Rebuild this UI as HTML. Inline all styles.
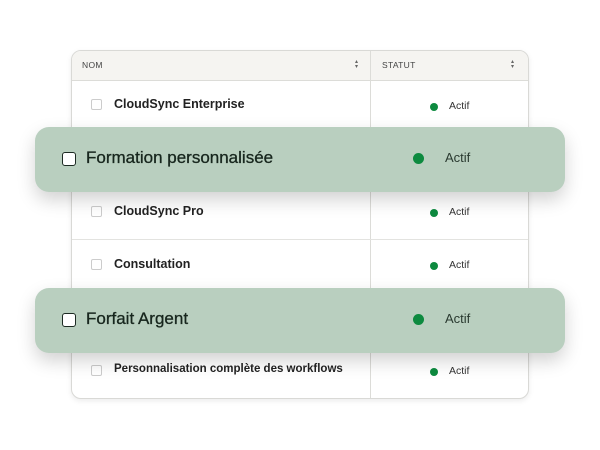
<!DOCTYPE html>
<html><head><style>
body{margin:0;width:600px;height:450px;background:#fff;font-family:"Liberation Sans",sans-serif;position:relative;overflow:hidden}
.tbl{position:absolute;left:71px;top:50px;width:456px;height:347px;border:1px solid #d9d9d6;border-radius:10px;overflow:hidden;box-shadow:0 2px 6px rgba(0,0,0,.08);background:#fff}
.hd{position:absolute;left:0;top:0;width:100%;height:29px;background:#f5f4f1;border-bottom:1px solid #dcdcd8}
.hd span{position:absolute;top:9px;font-size:8.5px;color:#444;letter-spacing:.3px}
.sort{position:absolute;top:9px;font-size:6px;color:#666;line-height:5px}
.vl{position:absolute;left:298px;top:0;width:1px;height:100%;background:#dcdcd8}
.hl{position:absolute;left:0;width:100%;height:1px;background:#e3e3e0}
.row{position:absolute;left:0;width:100%}
.cb{position:absolute;width:9px;height:9px;border:1px solid #ccc;border-radius:2px;left:19px}
.nm{position:absolute;left:42px;font-size:12.5px;font-weight:bold;color:#222}
.dot{position:absolute;left:358px;width:8px;height:8px;border-radius:50%;background:#0d8a3f}
.ac{position:absolute;left:377px;font-size:10.5px;color:#333}
.band{position:absolute;left:35px;width:530px;height:65px;background:#b9cfbf;border-radius:14px;box-shadow:0 8px 18px rgba(0,0,0,.18)}
.band .bcb{position:absolute;left:27px;top:25px;width:12px;height:12px;border:1.5px solid #1c2a22;border-radius:3px;background:#fff}
.band .bt{position:absolute;left:51px;top:21px;font-size:17px;color:#17261d;-webkit-text-stroke:0.3px #17261d}
.band .bd{position:absolute;left:378px;top:26px;width:11px;height:11px;border-radius:50%;background:#0d8a3f}
.band .ba{position:absolute;left:410px;top:23px;font-size:13px;color:#2a3a30}
</style></head><body>
<div class="tbl">
<div class="hd"><span style="left:10px">NOM</span><div class="sort" style="left:283px">▴<br>▾</div><span style="left:310px">STATUT</span><div class="sort" style="left:439px">▴<br>▾</div></div>
<div class="vl"></div>
<div class="hl" style="top:188px"></div>
<div class="hl" style="top:241px"></div>
<div class="row" style="top:30px"><div class="cb" style="top:18px"></div><div class="nm" style="top:16px">CloudSync Enterprise</div><div class="dot" style="top:22px"></div><div class="ac" style="top:19px">Actif</div></div>
<div class="row" style="top:136px"><div class="cb" style="top:19px"></div><div class="nm" style="top:17px">CloudSync Pro</div><div class="dot" style="top:22px"></div><div class="ac" style="top:19px">Actif</div></div>
<div class="row" style="top:189px"><div class="cb" style="top:19px"></div><div class="nm" style="top:17px">Consultation</div><div class="dot" style="top:22px"></div><div class="ac" style="top:19px">Actif</div></div>
<div class="row" style="top:295px"><div class="cb" style="top:19px"></div><div class="nm" style="top:17px;font-size:11.5px">Personnalisation complète des workflows</div><div class="dot" style="top:22px"></div><div class="ac" style="top:19px">Actif</div></div>
</div>
<div class="band" style="top:127px"><div class="bcb"></div><div class="bt">Formation personnalisée</div><div class="bd"></div><div class="ba">Actif</div></div>
<div class="band" style="top:288px"><div class="bcb"></div><div class="bt">Forfait Argent</div><div class="bd"></div><div class="ba">Actif</div></div>
</body></html>
